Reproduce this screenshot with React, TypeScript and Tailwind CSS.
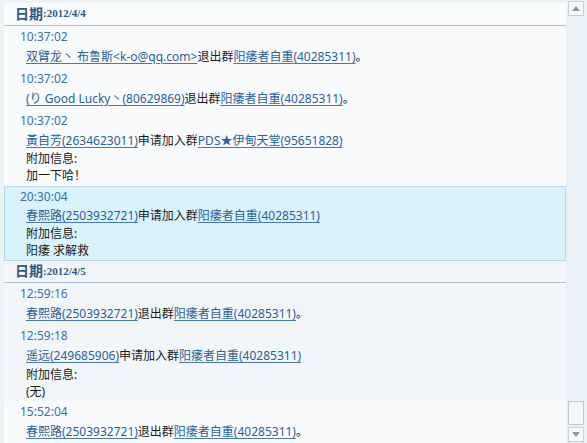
type Line = { kind: "msg" | "extra"; content: React.ReactNode };

type Entry = { time: string; lines: Line[]; active?: boolean; bg?: string };

const A = ({ children }: { children: React.ReactNode }) => (
  <span className="text-[#2d5f99] underline decoration-[#4a78ad] underline-offset-2">{children}</span>
);

const T = ({ children }: { children: React.ReactNode }) => <span className="text-[#1a1a1a]">{children}</span>;

const DateHeader = ({ date, className }: { date: string; className: string }) => (
  <div className={`flex items-center pl-[11px] border-b border-[#a9c3d3] mr-[1px] ${className}`}>
    <span className="text-[14px] font-bold text-[#36587c] leading-none">日期</span>
    <span
      className="text-[11px] font-bold text-[#36587c] leading-none"
      style={{ fontFamily: '"Liberation Serif", "Noto Sans CJK SC", serif' }}
    >
      :{date}
    </span>
  </div>
);

const EntryBlock = ({ e }: { e: Entry }) => (
  <div
    className={
      e.active
        ? "bg-[#d8f3fc] border border-[#b4d8e8] mr-[1px]"
        : `${e.bg ?? "bg-[#f8fafc]"} border border-transparent mr-[1px]`
    }
  >
    <div className="h-[20px] flex items-center pl-[15px] text-[#3a70ab]">{e.time}</div>
    {e.lines.map((l, i) => (
      <div
        key={i}
        className={`${l.kind === "msg" ? (e.active ? "h-[19px]" : "h-[20px]") : "h-[17px]"} flex items-center pl-[21px] whitespace-nowrap`}
      >
        {l.content}
      </div>
    ))}
  </div>
);

const ArrowBtn = ({ up }: { up?: boolean }) => (
  <div className="w-[16px] h-[15px] border border-[#c3d2dc] bg-[#f5f9fb] flex items-center justify-center">
    <svg width="8" height="5" viewBox="0 0 8 5">
      {up ? <path d="M0 5 L4 0 L8 5 Z" fill="#8497a7" /> : <path d="M0 0 L4 5 L8 0 Z" fill="#8497a7" />}
    </svg>
  </div>
);

const group1: Entry[] = [
  {
    time: "10:37:02",
    lines: [
      {
        kind: "msg",
        content: (
          <>
            <A>双臂龙丶 布鲁斯&lt;k-o@qq.com&gt;</A>
            <T>退出群</T>
            <A>阳痿者自重(40285311)</A>
            <T>。</T>
          </>
        ),
      },
    ],
  },
  {
    time: "10:37:02",
    lines: [
      {
        kind: "msg",
        content: (
          <>
            <A>(り Good Lucky丶(80629869)</A>
            <T>退出群</T>
            <A>阳痿者自重(40285311)</A>
            <T>。</T>
          </>
        ),
      },
    ],
  },
  {
    time: "10:37:02",
    lines: [
      {
        kind: "msg",
        content: (
          <>
            <A>黃自芳(2634623011)</A>
            <T>申请加入群</T>
            <A>PDS★伊甸天堂(95651828)</A>
          </>
        ),
      },
      { kind: "extra", content: <T>附加信息:</T> },
      { kind: "extra", content: <T>加一下哈！</T> },
    ],
  },
  {
    time: "20:30:04",
    active: true,
    lines: [
      {
        kind: "msg",
        content: (
          <>
            <A>春熙路(2503932721)</A>
            <T>申请加入群</T>
            <A>阳痿者自重(40285311)</A>
          </>
        ),
      },
      { kind: "extra", content: <T>附加信息:</T> },
      { kind: "extra", content: <T>阳痿 求解救</T> },
    ],
  },
];

const group2: Entry[] = [
  {
    time: "12:59:16",
    bg: "bg-[#f2f6f9]",
    lines: [
      {
        kind: "msg",
        content: (
          <>
            <A>春熙路(2503932721)</A>
            <T>退出群</T>
            <A>阳痿者自重(40285311)</A>
            <T>。</T>
          </>
        ),
      },
    ],
  },
  {
    time: "12:59:18",
    bg: "bg-[#f2f6f9]",
    lines: [
      {
        kind: "msg",
        content: (
          <>
            <A>遥远(249685906)</A>
            <T>申请加入群</T>
            <A>阳痿者自重(40285311)</A>
          </>
        ),
      },
      { kind: "extra", content: <T>附加信息:</T> },
      { kind: "extra", content: <T>(无)</T> },
    ],
  },
  {
    time: "15:52:04",
    lines: [
      {
        kind: "msg",
        content: (
          <>
            <A>春熙路(2503932721)</A>
            <T>退出群</T>
            <A>阳痿者自重(40285311)</A>
            <T>。</T>
          </>
        ),
      },
    ],
  },
];

export default function App() {
  return (
    <div
      className="w-[587px] h-[443px] overflow-hidden flex bg-[#edf2f5] text-[12px]"
      style={{ fontFamily: '"Noto Sans", "Noto Sans CJK SC", sans-serif' }}
    >
      <div className="w-[567px] pl-[4px] pt-[3px] flex flex-col overflow-hidden">
        <DateHeader date="2012/4/4" className="h-[29px] bg-[#f9fbfc]" />
        {group1.map((e, i) => (
          <EntryBlock key={i} e={e} />
        ))}
        <DateHeader date="2012/4/5" className="h-[28px] bg-[#f2f6f9]" />
        {group2.map((e, i) => (
          <EntryBlock key={i} e={e} />
        ))}
      </div>
      <div className="w-[20px] bg-[#e9f1f6] flex flex-col pl-[1px] pt-[1px] pb-[1px]">
        <ArrowBtn up />
        <div className="flex-1 flex flex-col justify-end pb-[2px]">
          <div className="w-[16px] h-[24px] border border-[#b8c9d5] bg-[#f2f6f9]" />
        </div>
        <ArrowBtn />
      </div>
    </div>
  );
}
